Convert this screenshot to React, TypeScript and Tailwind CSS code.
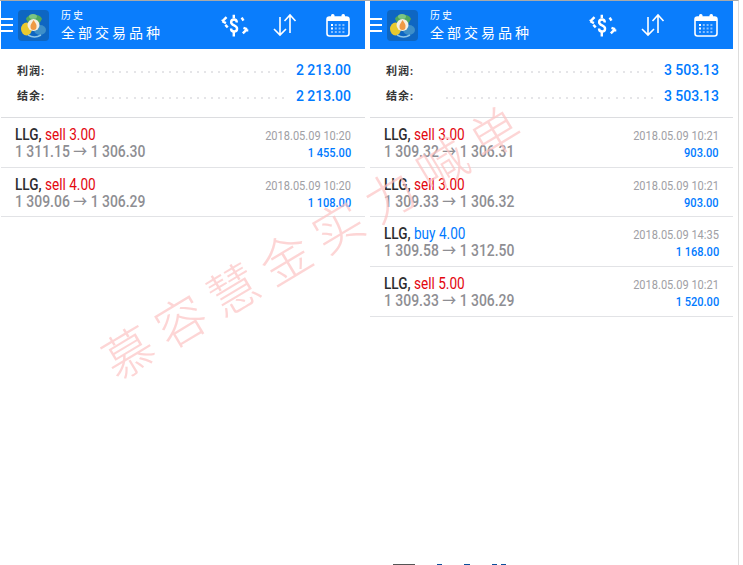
const sans = 'font-["Roboto","Noto_Sans_CJK_SC",sans-serif]';

interface Trade {
  side: 'sell' | 'buy';
  volume: string;
  open: string;
  close: string;
  time: string;
  profit: string;
}

interface Panel {
  total: string;
  trades: Trade[];
}

const panels: Panel[] = [
  {
    total: '2 213.00',
    trades: [
      { side: 'sell', volume: '3.00', open: '1 311.15', close: '1 306.30', time: '2018.05.09 10:20', profit: '1 455.00' },
      { side: 'sell', volume: '4.00', open: '1 309.06', close: '1 306.29', time: '2018.05.09 10:20', profit: '1 108.00' },
    ],
  },
  {
    total: '3 503.13',
    trades: [
      { side: 'sell', volume: '3.00', open: '1 309.32', close: '1 306.31', time: '2018.05.09 10:21', profit: '903.00' },
      { side: 'sell', volume: '3.00', open: '1 309.33', close: '1 306.32', time: '2018.05.09 10:21', profit: '903.00' },
      { side: 'buy', volume: '4.00', open: '1 309.58', close: '1 312.50', time: '2018.05.09 14:35', profit: '1 168.00' },
      { side: 'sell', volume: '5.00', open: '1 309.33', close: '1 306.29', time: '2018.05.09 10:21', profit: '1 520.00' },
    ],
  },
];

const watermark = ['慕', '容', '慧', '金', '实', '力', '喊', '单'];

function Logo() {
  return (
    <svg width="31" height="31" viewBox="0 0 31 31" className="shrink-0">
      <rect width="31" height="31" rx="4" fill="#0e66c2" />
      <path d="M8 9c1-5 14-6 16 0l-3 5H11z" fill="#4fa85c" />
      <ellipse cx="15" cy="6.500" rx="4" ry="2.500" fill="#7cc583" />
      <ellipse cx="8.500" cy="19" rx="5.500" ry="6.500" fill="#e8c92f" />
      <ellipse cx="22" cy="20" rx="6" ry="5" fill="#3d8fc9" />
      <circle cx="15.500" cy="15" r="6" fill="#f3efe2" />
      <path d="M15.500 10c2 3 3.500 4.500 3 7a3 3 0 0 1-6 0c-.3-2.500 1.500-4 3-7z" fill="#ee9a45" />
      <path d="M10 25c4 2.500 9 2.500 13 0" stroke="#8cc5e8" strokeWidth="1.500" fill="none" />
    </svg>
  );
}

function DollarIcon() {
  return (
    <svg width="34" height="29" viewBox="0 0 28 24" fill="none" stroke="white" strokeWidth="2" className="shrink-0">
      <path d="M15.500 9.500c0-1.700-1-2.500-2.300-2.500-1.400 0-2.400 1-2.400 2.300 0 3 4.900 2.300 4.900 5.300 0 1.400-1 2.400-2.500 2.400s-2.500-1-2.500-2.500" />
      <path d="M13 3v3M13 17v4" />
      <path d="M7 5 3.500 8.500M3.500 8.500l3 1.500M3.500 8.500l.5-1" />
      <path d="M8 13.500 6 11.500" />
      <path d="M20.500 18.500 24 15M24 15l-3-1M24 15v2" />
      <path d="M19.500 5.500 21 8" />
    </svg>
  );
}

function SortIcon() {
  return (
    <svg width="26" height="24" viewBox="0 0 26 24" fill="none" stroke="white" strokeWidth="1.600" className="shrink-0">
      <path d="M8 4v18M2 16l6 6 6-6" />
      <path d="M18 20V2M12.500 8 18 2l5.500 6" />
    </svg>
  );
}

function CalendarIcon() {
  const dots = [0, 1, 2, 3, 4, 5, 6, 7, 8, 9, 10, 11];
  return (
    <svg width="24" height="24" viewBox="0 0 24 24" fill="none" className="shrink-0">
      <rect x="1" y="4" width="22" height="19" rx="2.500" stroke="white" strokeWidth="1.600" />
      <rect x="1" y="4" width="22" height="4" fill="white" />
      <rect x="5" y="1" width="3.500" height="5" rx="1.500" fill="white" />
      <rect x="15.500" y="1" width="3.500" height="5" rx="1.500" fill="white" />
      {dots.map((d) => (
        <rect
          key={d}
          x={5 + (d % 4) * 3.800}
          y={11 + Math.floor(d / 4) * 3.500}
          width="2"
          height="2"
          fill="white"
          opacity={d === 0 || d === 4 ? 1 : 0.5}
        />
      ))}
    </svg>
  );
}

function Header() {
  return (
    <div className="flex h-12 items-center bg-[#0a7dfc] text-white">
      <div className="flex w-[12px] shrink-0 flex-col gap-[4px]">
        <div className="h-[2px] bg-white" />
        <div className="h-[2px] bg-white" />
        <div className="h-[2px] bg-white" />
      </div>
      <div className="ml-[5px]">
        <Logo />
      </div>
      <div className={`ml-[12px] flex flex-1 flex-col ${sans}`}>
        <span className="text-[10px] leading-[13px] tracking-[2px]">历史</span>
        <span className="mt-[2px] mb-[-1px] text-[14px] leading-[18px] tracking-[3px]">全部交易品种</span>
      </div>
      <div className="mr-[15px] flex items-center">
        <DollarIcon />
        <div className="mr-[28px] ml-[20px]">
          <SortIcon />
        </div>
        <CalendarIcon />
      </div>
    </div>
  );
}

function SummaryRow({ label, value }: { label: string; value: string }) {
  const dots = Array.from({ length: 30 }, (_, i) => i);
  return (
    <div className={`flex h-[25.500px] items-center ${sans}`}>
      <span className="w-[60px] pt-[2px] text-[11px] font-bold tracking-[1px] text-[#333]">{label}</span>
      <div className="flex w-[207px] justify-between pt-[3px]">
        {dots.map((d) => (
          <span key={d} className="h-[2px] w-[2px] rounded-full bg-[#dcdde0]" />
        ))}
      </div>
      <span className="ml-auto text-[14px] font-medium text-[#007aff]">{value}</span>
    </div>
  );
}

function TradeRow({ trade }: { trade: Trade }) {
  return (
    <div className={`flex h-[49.700px] items-start justify-between border-b border-[#e2e3e6] px-[14px] pt-[8px] ${sans}`}>
      <div className="flex flex-col">
        <span className="origin-left scale-x-[.85] text-[16px] leading-[18px] font-medium whitespace-nowrap text-[#2c2c30]">
          LLG,{' '}
          <span className={`font-normal ${trade.side === 'sell' ? 'text-[#e3060f]' : 'text-[#007aff]'}`}>
            {trade.side} {trade.volume}
          </span>
        </span>
        <span className="origin-left scale-x-[.87] text-[16px] leading-[16px] font-medium whitespace-nowrap text-[#8e8e93]">
          {trade.open} → {trade.close}
        </span>
      </div>
      <div className="flex flex-col items-end pt-[2px]">
        <span className="origin-right scale-x-[.85] text-[13px] leading-[15px] whitespace-nowrap text-[#a0a0a5]">{trade.time}</span>
        <span className="mt-[2px] origin-right scale-x-[.85] text-[13px] leading-[16px] font-medium whitespace-nowrap text-[#007aff]">
          {trade.profit}
        </span>
      </div>
    </div>
  );
}

function HistoryPanel({ panel, className }: { panel: Panel; className: string }) {
  return (
    <div className={className}>
      <Header />
      <div className="h-[69px] border-b border-[#dcdde0] pt-[9px] pr-[14px] pl-[16px]">
        <SummaryRow label="利润:" value={panel.total} />
        <SummaryRow label="结余:" value={panel.total} />
      </div>
      {panel.trades.map((trade, i) => (
        <TradeRow key={i} trade={trade} />
      ))}
    </div>
  );
}

export default function App() {
  return (
    <div className="relative h-[565px] w-[743px] overflow-hidden bg-white">
      <div className="flex h-full w-[739px] border-t border-r border-t-[#a9a9a9] border-r-[#dddddd]">
        <HistoryPanel panel={panels[0]} className="ml-px w-[364px]" />
        <HistoryPanel panel={panels[1]} className="ml-[5px] w-[363px]" />
      </div>

      {/* Watermark */}
      <div className="pointer-events-none absolute top-[240px] left-[310px] flex -translate-x-1/2 -translate-y-1/2 -rotate-[31deg] gap-[11px] font-['Noto_Sans_CJK_SC',sans-serif] text-[50px] leading-none font-light whitespace-nowrap text-[#fdc4c4] opacity-70">
        {watermark.map((char, i) => (
          <span key={i}>{char}</span>
        ))}
      </div>

      {/* Clipped line of text at the bottom edge */}
      <div className="absolute top-[564px] left-[393px] flex gap-[22px]">
        <div className="h-px w-[22px] bg-[#555]" />
        <div className="h-px w-[5px] bg-[#0b4f9c]" />
        <div className="h-px w-[6px] bg-[#0b4f9c]" />
        <div className="flex gap-[4px]">
          <div className="h-px w-[5px] bg-[#0b4f9c]" />
          <div className="h-px w-[5px] bg-[#0b4f9c]" />
        </div>
      </div>
    </div>
  );
}
